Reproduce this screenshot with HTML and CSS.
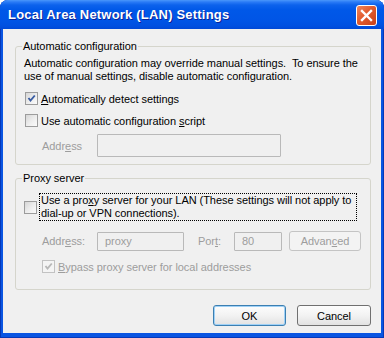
FILE: index.html
```html
<!DOCTYPE html>
<html>
<head>
<meta charset="utf-8">
<link rel="stylesheet" href="styles.css">
</head>
<body>
<div class="window">
  <div class="titlebar">
    <span class="title">Local Area Network (LAN) Settings</span>
    <span class="close"><svg width="21" height="21" viewBox="0 0 21 21"><path d="M6 6 L15 15 M15 6 L6 15" stroke="#fff" stroke-width="2.4" stroke-linecap="square"/></svg></span>
  </div>
  <div class="body">
    <fieldset class="group g1">
      <legend>Automatic configuration</legend>
      <p class="desc">Automatic configuration may override manual settings.&nbsp; To ensure the<br>use of manual settings, disable automatic configuration.</p>
      <div class="cbrow r1">
        <span class="cb"><svg width="11" height="11" viewBox="0 0 11 11"><path d="M2.5 5 L4.5 7.5 L8.8 2.5" fill="none" stroke="#3a5da3" stroke-width="1.9"/></svg></span>
        <span><u>A</u>utomatically detect settings</span>
      </div>
      <div class="cbrow r2">
        <span class="cb"></span>
        <span>Use automatic configuration <u>s</u>cript</span>
      </div>
      <div class="addrrow">
        <span class="lbl dis">Addr<u>e</u>ss</span>
        <span class="tb wide"></span>
      </div>
    </fieldset>
    <fieldset class="group g2">
      <legend>Proxy server</legend>
      <div class="proxyrow">
        <span class="cb"></span>
        <span class="focus">Use a pro<u>x</u>y server for your LAN (These settings will not apply to<br>dial-up or VPN connections).</span>
      </div>
      <div class="proxyaddr">
        <span class="lbl dis">Addr<u>e</u>ss:</span>
        <span class="tb small dis">proxy</span>
        <span class="portlbl dis">Por<u>t</u>:</span>
        <span class="tb port dis">80</span>
        <span class="btn disbtn">Advan<u>c</u>ed</span>
      </div>
      <div class="cbrow bypass dis">
        <span class="cb discb"><svg width="11" height="11" viewBox="0 0 11 11"><path d="M2.5 5 L4.5 7.5 L8.8 2.5" fill="none" stroke="#b8b8b8" stroke-width="1.9"/></svg></span>
        <span><u>B</u>ypass proxy server for local addresses</span>
      </div>
    </fieldset>
    <div class="buttons">
      <span class="btn ok">OK</span>
      <span class="btn">Cancel</span>
    </div>
  </div>
</div>
</body>
</html>
```

FILE: styles.css
```css
html, body {
  margin: 0;
  padding: 0;
  background: #ffffff;
}
body {
  font-family: "Liberation Sans", Arial, sans-serif;
  font-size: 11px;
  letter-spacing: -0.05px;
  color: #000;
}
.window {
  width: 384px;
  height: 338px;
  background: #0a55e2;
  border-radius: 8px 8px 0 0;
  display: flex;
  flex-direction: column;
  box-shadow: inset 1px 0 #0638b8, inset -1px 0 #0638b8, inset 0 -1px #0638b8;
}
.titlebar {
  height: 29px;
  flex: none;
  display: flex;
  align-items: center;
  padding: 0 7px 0 8px;
  border-radius: 8px 8px 0 0;
  background: linear-gradient(#4a97fb 0, #2a7bf6 2px, #0c62ec 5px, #0058e8 10px, #0055e6 20px, #0050e0 26px, #0048d6 29px);
}
.title {
  flex: 1;
  color: #fff;
  font-family: "Liberation Sans", Arial, sans-serif;
  font-weight: bold;
  font-size: 13px;
  text-shadow: 1px 1px #0c2296;
  letter-spacing: 0.2px;
}
.close {
  width: 21px;
  height: 21px;
  margin-top: 2px;
  box-sizing: border-box;
  border: 1px solid #fff;
  border-radius: 3px;
  background: linear-gradient(135deg, #f0855a 0%, #e25c2e 45%, #c8401a 100%);
  display: flex;
  align-items: center;
  justify-content: center;
}
.close svg { display: block; margin: -1px; }
.body {
  flex: 1;
  margin: 0 3px 5px 3px;
  background: #f0f0f0;
  padding: 0 10px 0 12px;
  display: flex;
  flex-direction: column;
}
.group {
  margin: 0;
  padding: 0 0 7px 0;
  border: 1px solid #d5d5cc;
  border-radius: 3px;
  min-width: 0;
  width: 356px;
  box-sizing: border-box;
}
.g1 { margin-top: 11px; }
.g2 { margin-top: 7px; padding-bottom: 14px; }
legend {
  margin-left: 6px;
  padding: 0 1px;
  line-height: 13px;
  height: 13px;
}
.desc {
  margin: 4px 0 0 8px;
  line-height: 13px;
}
.cbrow {
  display: flex;
  align-items: center;
  height: 17px;
  margin-left: 9px;
  gap: 3px;
}
.r1 { margin-top: 7px; }
.r2 { margin-top: 5px; }
.cb {
  width: 13px;
  height: 13px;
  box-sizing: border-box;
  border: 1px solid #9c9c9c;
  background: linear-gradient(135deg, #d6d6d6 0%, #ececec 50%, #fbfbfb 100%);
  display: flex;
  align-items: center;
  justify-content: center;
  flex: none;
}
.cb svg { display: block; }
.discb {
  border-color: #c2c2c2;
  background: #f4f4f4;
}
.dis { color: #9d9d9d; }
.addrrow {
  display: flex;
  align-items: center;
  margin-top: 5px;
  margin-left: 26px;
}
.lbl { width: 55px; }
.tb {
  box-sizing: border-box;
  border: 1px solid #b9b9b9;
  border-radius: 1px;
  background: #f0f0f0;
  height: 23px;
  display: flex;
  align-items: center;
  padding-left: 7px;
}
.wide { width: 184px; }
.proxyrow {
  display: flex;
  align-items: center;
  margin-top: 8px;
  margin-left: 8px;
  gap: 2px;
}
.focus {
  border: 1px dotted #000;
  line-height: 13px;
  padding: 0 0 0 1px;
  width: 315px;
}
.proxyaddr {
  display: flex;
  align-items: center;
  margin-top: 10px;
  margin-left: 26px;
}
.small { width: 87px; height: 19px; }
.portlbl { margin-left: 14px; width: 36px; }
.port { width: 48px; height: 19px; }
.btn {
  box-sizing: border-box;
  display: flex;
  align-items: center;
  justify-content: center;
  border: 1px solid #707070;
  border-radius: 3px;
  background: linear-gradient(#fdfdfd 0%, #f2f2f2 50%, #e2e2e2 100%);
  height: 21px;
  width: 74px;
}
.disbtn {
  margin-left: 7px;
  width: 72px;
  height: 20px;
  color: #9d9d9d;
  border-color: #c4c4c4;
  background: #f3f3f3;
}
.bypass {
  margin-left: 26px;
  margin-top: 7px;
}
.buttons {
  display: flex;
  justify-content: flex-end;
  gap: 11px;
  margin-top: 15px;
  width: 356px;
}
.ok {
  width: 73px;
  border-color: #3c7fb1;
  box-shadow: inset 0 0 0 1px #9fd1f7;
}
u { text-decoration: underline; text-underline-offset: 1px; }
```
